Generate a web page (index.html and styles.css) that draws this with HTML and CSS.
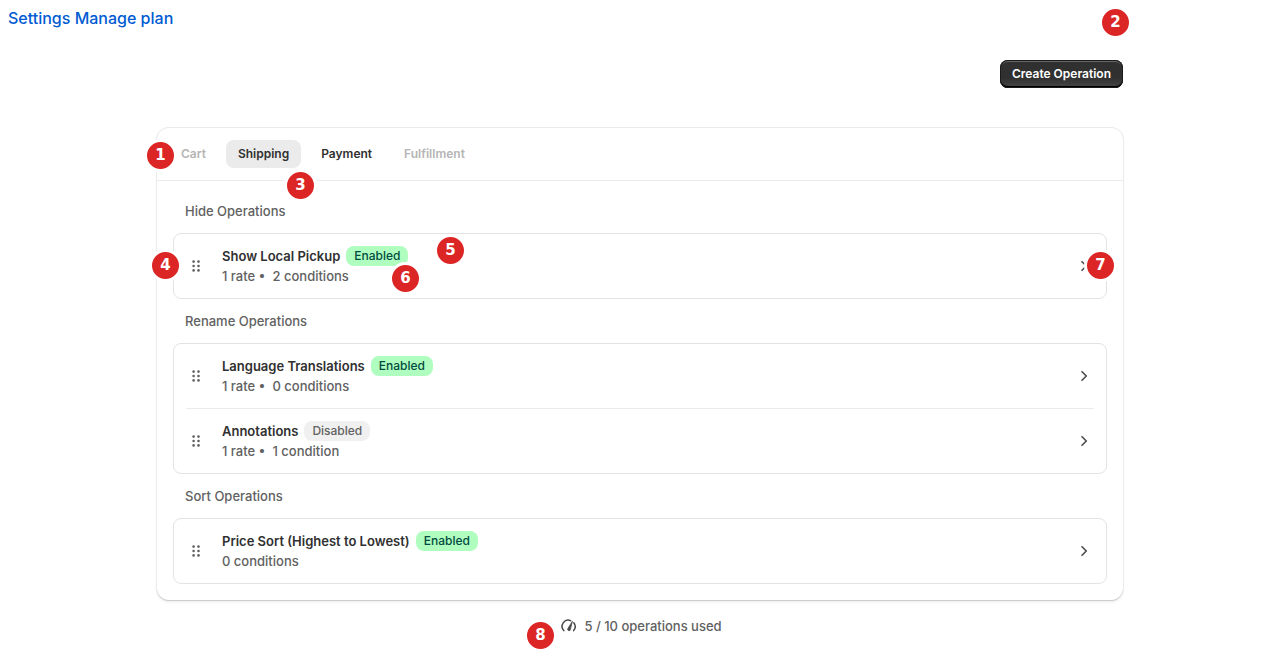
FILE: index.html
```html
<!DOCTYPE html>
<html lang="en">
<head>
<meta charset="utf-8">
<meta name="viewport" content="width=device-width, initial-scale=1">
<title>Operations</title>
<link rel="stylesheet" href="styles.css">
</head>
<body>
<svg class="sprite" aria-hidden="true">
  <symbol id="drag" viewBox="0 0 20 20"><circle cx="7.6" cy="5.6" r="1.3"/><circle cx="12.5" cy="5.6" r="1.3"/><circle cx="7.6" cy="10" r="1.3"/><circle cx="12.5" cy="10" r="1.3"/><circle cx="7.6" cy="14.4" r="1.3"/><circle cx="12.5" cy="14.4" r="1.3"/></symbol>
  <symbol id="chevron" viewBox="0 0 20 20"><path d="M8 5.7 12.3 10 8 14.3" fill="none" stroke="currentColor" stroke-width="1.6" stroke-linecap="round" stroke-linejoin="round"/></symbol>
</svg>
<nav class="app-nav"><a href="#settings">Settings</a> <a href="#plan">Manage plan</a></nav>
<main class="page">
  <header class="page-header"><button class="primary" type="button">Create Operation</button></header>
  <section class="card">
    <div class="tabs" role="tablist">
      <button class="tab" type="button" role="tab" disabled>Cart</button>
      <button class="tab selected" type="button" role="tab" aria-selected="true">Shipping</button>
      <button class="tab" type="button" role="tab">Payment</button>
      <button class="tab" type="button" role="tab" disabled>Fulfillment</button>
    </div>
    <div class="groups">
      <h2 class="group-title">Hide Operations</h2>
      <ul class="list">
        <li class="item">
          <svg class="icon drag"><use href="#drag"/></svg>
          <div class="details">
            <div class="name-row"><h3 class="name">Show Local Pickup</h3><span class="badge enabled">Enabled</span></div>
            <p class="meta">1 rate •&nbsp; 2 conditions</p>
          </div>
          <svg class="icon"><use href="#chevron"/></svg>
        </li>
      </ul>
      <h2 class="group-title">Rename Operations</h2>
      <ul class="list">
        <li class="item">
          <svg class="icon drag"><use href="#drag"/></svg>
          <div class="details">
            <div class="name-row"><h3 class="name">Language Translations</h3><span class="badge enabled">Enabled</span></div>
            <p class="meta">1 rate •&nbsp; 0 conditions</p>
          </div>
          <svg class="icon"><use href="#chevron"/></svg>
        </li>
        <li class="item">
          <svg class="icon drag"><use href="#drag"/></svg>
          <div class="details">
            <div class="name-row"><h3 class="name">Annotations</h3><span class="badge">Disabled</span></div>
            <p class="meta">1 rate •&nbsp; 1 condition</p>
          </div>
          <svg class="icon"><use href="#chevron"/></svg>
        </li>
      </ul>
      <h2 class="group-title">Sort Operations</h2>
      <ul class="list">
        <li class="item">
          <svg class="icon drag"><use href="#drag"/></svg>
          <div class="details">
            <div class="name-row"><h3 class="name">Price Sort (Highest to Lowest)</h3><span class="badge enabled">Enabled</span></div>
            <p class="meta">0 conditions</p>
          </div>
          <svg class="icon"><use href="#chevron"/></svg>
        </li>
      </ul>
    </div>
  </section>
  <footer class="usage">
    <svg class="icon" viewBox="0 0 20 20" fill="none" stroke="currentColor" stroke-width="1.5" stroke-linecap="round" stroke-linejoin="round"><path d="M5.8 14.6A6.2 6.2 0 0 1 12.6 4.6M15.8 6.8A6.2 6.2 0 0 1 15.6 14.6"/><path d="M14.3 5.6 12.4 13.4A1.4 1.4 0 1 1 9.9 12.4Z" fill="currentColor" stroke-width="0.8"/></svg>
    <span>5 / 10 operations used</span>
  </footer>
  <span class="marker m1">1</span>
  <span class="marker m2">2</span>
  <span class="marker m3">3</span>
  <span class="marker m4">4</span>
  <span class="marker m5">5</span>
  <span class="marker m6">6</span>
  <span class="marker m7">7</span>
  <span class="marker m8">8</span>
</main>
</body>
</html>
```
FILE: styles.css
```css
* { box-sizing: border-box; }
body {
  margin: 0;
  background: #fff;
  color: #303030;
  font: 450 13px/20px Inter, sans-serif;
}
h2, h3, p, ul { margin: 0; padding: 0; }
button { font: inherit; border: 0; }
.sprite { position: absolute; width: 0; height: 0; }
.app-nav {
  height: 36px;
  padding: 8px;
  font-size: 16px;
}
.app-nav a { color: #005bd3; text-decoration: none; }
.page {
  position: relative;
  max-width: 966px;
  margin: 0 auto;
}
.page-header {
  display: flex;
  justify-content: flex-end;
  padding: 24px 0 40px;
}
.primary {
  height: 28px;
  padding: 0 12px;
  border-radius: 8px;
  background: linear-gradient(#303030 63%, #474747);
  box-shadow: inset 0 0 0 1px #1a1a1a, inset 0 -2px 0 #000, inset 0 2px 0 #666;
  color: #fff;
  font-size: 12px;
  font-weight: 600;
  line-height: 16px;
}
.card {
  border-radius: 12px;
  background: #fff;
  box-shadow: 0 1px 0 #ccc, 0 0 0 1px #ebebeb, 0 2px 3px #00000014;
}
.tabs {
  display: flex;
  gap: 8px;
  padding: 12px 12px 12px;
  border-bottom: 1px solid #ebebeb;
}
.tab {
  height: 28px;
  padding: 0 12px;
  border-radius: 8px;
  background: transparent;
  color: #303030;
  font-size: 12px;
  font-weight: 600;
  line-height: 16px;
}
.tab:disabled { color: #b5b5b5; }
.tab.selected { background: #ebebeb; }
.groups {
  display: flex;
  flex-direction: column;
  gap: 12px;
  padding: 20px 16px 16px;
}
.group-title {
  padding: 0 12px;
  color: #616161;
  font-size: 13px;
  font-weight: 450;
}
.list {
  padding: 0 12px;
  border: 1px solid #e3e3e3;
  border-radius: 8px;
  list-style: none;
}
.item {
  display: flex;
  align-items: center;
  padding: 12px 0;
}
.item + .item { border-top: 1px solid #ebebeb; }
.icon {
  flex: none;
  width: 20px;
  height: 20px;
  color: #4a4a4a;
}
.drag { fill: #616161; }
.details { flex: 1; padding: 0 16px; }
.name-row { display: flex; gap: 6px; }
.name { font-size: 13px; font-weight: 600; }
.meta { color: #616161; }
.badge {
  padding: 0 8px;
  border-radius: 8px;
  background: #f0f0f0;
  color: #616161;
  font-size: 12px;
  font-weight: 500;
}
.badge.enabled { background: #affebf; color: #014b40; }
.usage {
  display: flex;
  justify-content: center;
  gap: 6px;
  padding: 16px 0;
  color: #616161;
}
.marker {
  position: absolute;
  width: 33px;
  height: 33px;
  border: 3px solid #fff;
  border-radius: 50%;
  background: #dc2626;
  color: #fff;
  font: 700 15px/26px "DejaVu Sans", sans-serif;
  text-align: center;
}
.m1 { left: -13px; top: 103px; }
.m2 { left: 942px; top: -30px; }
.m3 { left: 127px; top: 133px; }
.m4 { left: -8px; top: 213px; }
.m5 { left: 277px; top: 198px; }
.m6 { left: 232px; top: 226px; }
.m7 { left: 927px; top: 213px; }
.m8 { left: 367px; top: 583px; }
```
